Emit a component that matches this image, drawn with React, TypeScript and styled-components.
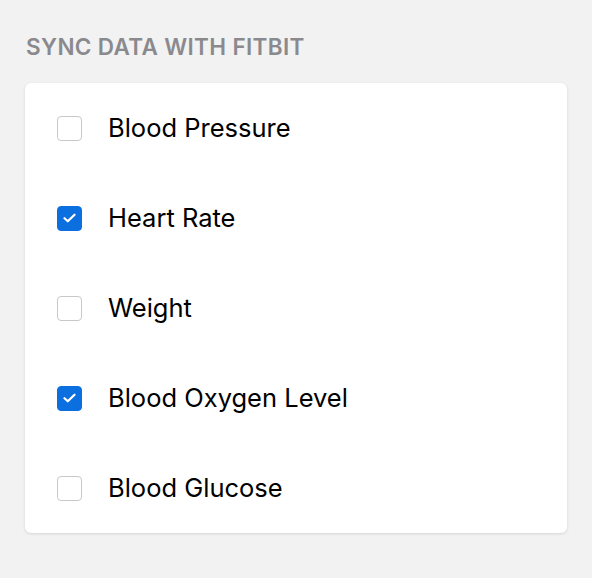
import styled, { createGlobalStyle } from 'styled-components';

const GlobalStyle = createGlobalStyle`
  body {
    margin: 0;
    background: #f2f2f2;
    font-family: Inter, "Liberation Sans", sans-serif;
  }
`;

const Page = styled.div`
  width: 592px;
  height: 578px;

  padding: 34px 25px 0 25px;
  box-sizing: border-box;

  display: flex;
  flex-direction: column;
  gap: 23px;
`;

const Heading = styled.h2`
  margin: 0 0 0 1px;

  font-size: 22.5px;
  font-weight: 600;
  letter-spacing: 0.35px;
  line-height: 26px;

  color: #8a8a8e;
`;

const Card = styled.div`
  display: flex;
  flex-direction: column;

  background: #fff;
  border-radius: 6px;
  box-shadow: 0 1px 3px rgba(0, 0, 0, 0.12);
`;

const Row = styled.label`
  height: 90px;

  padding-left: 32px;

  display: flex;
  align-items: center;
  gap: 26px;

  cursor: pointer;
`;

const Box = styled.span<{ $checked: boolean }>`
  width: 25px;
  height: 25px;
  box-sizing: border-box;

  display: flex;
  align-items: center;
  justify-content: center;

  border-radius: 4px;
  border: 1.5px solid ${(p) => (p.$checked ? '#0b6fe0' : '#c8c8c8')};
  background: ${(p) => (p.$checked ? '#0b6fe0' : '#fff')};
`;

const Label = styled.span`
  margin-top: -2px;

  font-size: 25.5px;
  color: #000;
`;

const items = [
  { name: 'Blood Pressure', checked: false },
  { name: 'Heart Rate', checked: true },
  { name: 'Weight', checked: false },
  { name: 'Blood Oxygen Level', checked: true },
  { name: 'Blood Glucose', checked: false },
];

export default function App() {
  return (
    <>
      <GlobalStyle />
      <Page>
        <Heading>SYNC DATA WITH FITBIT</Heading>
        <Card>
          {items.map((item) => (
            <Row key={item.name}>
              <Box $checked={item.checked}>
                {item.checked && (
                  <svg width="13" height="10" viewBox="0 0 13 10">
                    <path
                      d="M1.5 5.2 L4.8 8.3 L11.5 1.7"
                      fill="none"
                      stroke="#fff"
                      strokeWidth="2.2"
                      strokeLinecap="round"
                      strokeLinejoin="round"
                    />
                  </svg>
                )}
              </Box>
              <Label>{item.name}</Label>
            </Row>
          ))}
        </Card>
      </Page>
    </>
  );
}
